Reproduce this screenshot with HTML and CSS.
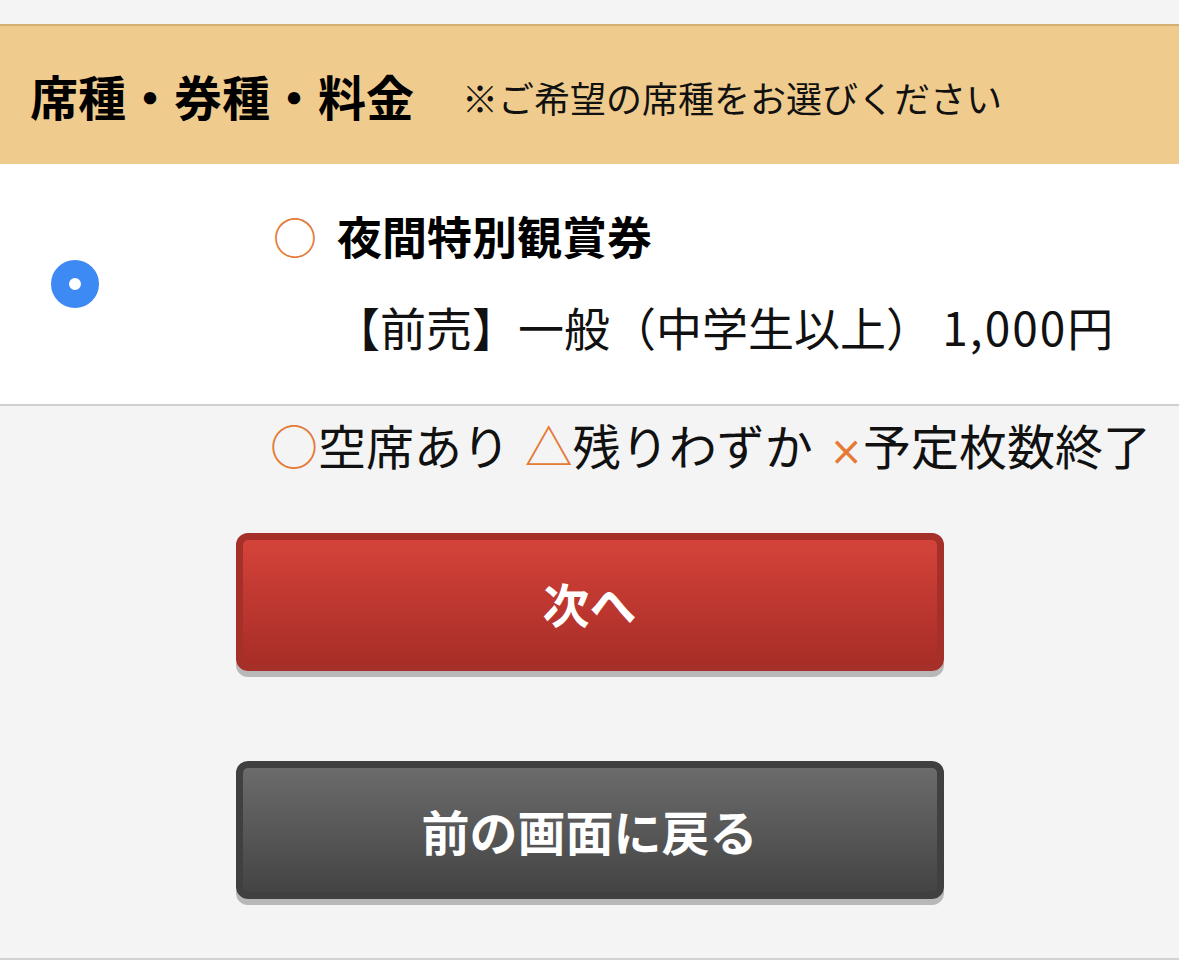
FILE: index.html
```html
<!DOCTYPE html>
<html lang="ja">
<head>
<meta charset="utf-8">
<title>席種・券種・料金</title>
<link rel="stylesheet" href="styles.css">
</head>
<body>
<div class="page">
  <header class="section-head">
    <h1 class="section-title">席種・券種・料金</h1>
    <p class="section-note">※ご希望の席種をお選びください</p>
  </header>

  <div class="ticket">
    <div class="ticket-radio"><span class="radio-on"></span></div>
    <div class="ticket-body">
      <div class="ticket-name"><span class="mark-ok">○</span><span class="name-text">夜間特別観賞券</span></div>
      <div class="ticket-price">【前売】一般（中学生以上） <span class="price-num">1,000</span>円</div>
    </div>
  </div>

  <p class="legend"><span class="mark-ok">○</span>空席あり <span class="mark-few">△</span>残りわずか <span class="mark-none">×</span>予定枚数終了</p>

  <div class="actions">
    <button class="btn btn-next" type="button">次へ</button>
    <button class="btn btn-back" type="button">前の画面に戻る</button>
  </div>
</div>
</body>
</html>
```

FILE: styles.css
```css
html, body {
  margin: 0;
  padding: 0;
  background: #f4f4f4;
}

body {
  font-family: "Noto Sans CJK JP", "Noto Sans", sans-serif;
  color: #111;
}

.page {
  padding-top: 24px;
  min-height: 934px;
  box-sizing: content-box;
  border-bottom: 2px solid #d2d2d2;
}

.section-head {
  display: flex;
  align-items: center;
  height: 140px;
  box-sizing: border-box;
  border-top: 2px solid #d5b075;
  background: #f0cb8e;
  padding-left: 30px;
}

.section-title {
  margin: 0;
  font-size: 48px;
  font-weight: 700;
  line-height: 1;
  color: #000;
}

.section-note {
  margin: 4px 0 0 48px;
  font-size: 36px;
  line-height: 1;
  color: #111;
}

.ticket {
  display: flex;
  align-items: center;
  height: 242px;
  box-sizing: border-box;
  background: #fff;
  border-bottom: 2px solid #cfcfcf;
}

.ticket-radio {
  width: 273px;
  padding-left: 51px;
  box-sizing: border-box;
  display: flex;
  align-items: center;
}

.radio-on {
  display: block;
  width: 12px;
  height: 12px;
  border: 18px solid #3e8af5;
  border-radius: 50%;
  background: #fff;
}

.ticket-body {
  display: flex;
  flex-direction: column;
  gap: 46px;
  padding-bottom: 6px;
}

.ticket-name {
  display: flex;
  align-items: center;
  font-size: 45px;
  line-height: 44px;
  font-weight: 700;
  color: #000;
}

.ticket-name .mark-ok {
  font-weight: 400;
  font-size: 44px;
  width: 64px;
}

.ticket-price {
  padding-left: 61px;
  font-size: 46px;
  line-height: 44px;
  color: #111;
  white-space: nowrap;
}

.price-num {
  letter-spacing: 2px;
}

.mark-ok,
.mark-few,
.mark-none {
  color: #e47a36;
}

.legend {
  margin: 0;
  padding: 14px 0 0 270px;
  font-size: 48px;
  line-height: 48px;
  height: 48px;
  color: #111;
  white-space: nowrap;
  word-spacing: 4px;
}

.mark-none {
  font-size: 40px;
  line-height: 0;
  margin-left: 2px;
  font-family: "DejaVu Sans", sans-serif;
}

.actions {
  display: flex;
  flex-direction: column;
  align-items: center;
  gap: 90px;
  padding-top: 65px;
}

.btn {
  display: block;
  width: 708px;
  height: 138px;
  box-sizing: border-box;
  border-radius: 12px;
  border: 7px solid;
  font-family: inherit;
  font-size: 47px;
  font-weight: 700;
  color: #fff;
  cursor: pointer;
  padding: 0;
}

.btn-next {
  border-color: #a5302a;
  background: linear-gradient(#d4433a, #a82d27);
  box-shadow: 0 6px 0 #b8b8b8;
}

.btn-back {
  font-size: 48px;
  border-color: #404040;
  background: linear-gradient(#6b6b6b, #444);
  box-shadow: 0 6px 0 #b8b8b8;
}
```
